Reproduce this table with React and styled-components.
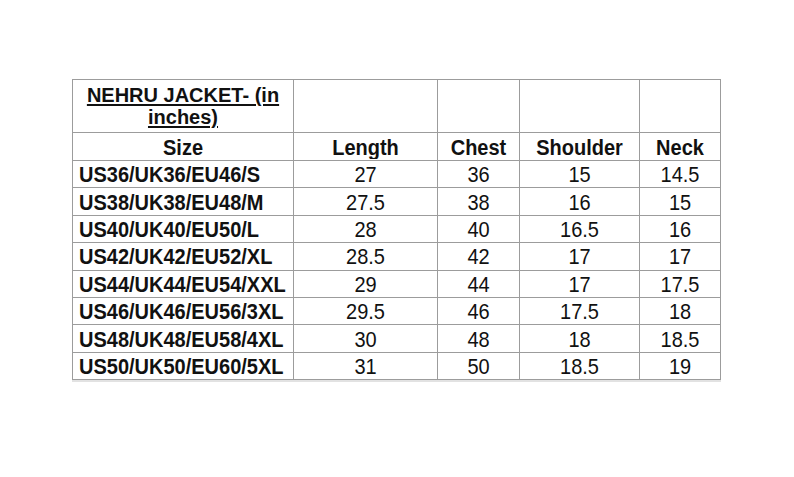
import React from "react";
import styled, { createGlobalStyle } from "styled-components";

const GlobalStyle = createGlobalStyle`
  html, body {
    margin: 0;
    padding: 0;
    background: #ffffff;
  }
  body {
    font-family: "Liberation Sans", Arial, sans-serif;
  }
`;

const Page = styled.div`
  width: 794px;
  height: 477px;
  box-sizing: border-box;
  padding: 79px 0 0 72px;
  background: #fff;
`;

const Table = styled.table`
  border-collapse: collapse;
  table-layout: fixed;
  color: #111;
  font-family: "Liberation Sans", Arial, sans-serif;
  font-size: 20px;
  box-shadow: 0 2px 0 #e2e2e2;
`;

const Cell = styled.td`
  border: 1px solid #9c9c9c;
  padding: 0 6px;
  height: ${(p) => p.h || 26.4}px;
  line-height: 22px;
  text-align: ${(p) => (p.left ? "left" : "center")};
  font-weight: ${(p) => (p.bold ? 700 : 400)};
  vertical-align: middle;
  white-space: nowrap;
  overflow: hidden;
`;

const Text = styled.span`
  display: inline-block;
  transform: scaleY(1.08);
`;

const Title = styled.td`
  border: 1px solid #9c9c9c;
  height: 52px;
  padding: 0 8px;
  text-align: center;
  font-weight: 700;
  line-height: 22px;
  vertical-align: middle;
  text-decoration: underline;
  text-underline-offset: 2px;
`;

const widths = [221, 144, 82, 120, 81];

const rows = [
  ["US36/UK36/EU46/S", "27", "36", "15", "14.5"],
  ["US38/UK38/EU48/M", "27.5", "38", "16", "15"],
  ["US40/UK40/EU50/L", "28", "40", "16.5", "16"],
  ["US42/UK42/EU52/XL", "28.5", "42", "17", "17"],
  ["US44/UK44/EU54/XXL", "29", "44", "17", "17.5"],
  ["US46/UK46/EU56/3XL", "29.5", "46", "17.5", "18"],
  ["US48/UK48/EU58/4XL", "30", "48", "18", "18.5"],
  ["US50/UK50/EU60/5XL", "31", "50", "18.5", "19"],
];

export default function App() {
  return (
    <>
      <GlobalStyle />
      <Page>
        <Table>
          <colgroup>
            {widths.map((w, i) => (
              <col key={i} style={{ width: w }} />
            ))}
          </colgroup>
          <tbody>
            <tr>
              <Title>NEHRU JACKET- (in inches)</Title>
              <Cell h={52} />
              <Cell h={52} />
              <Cell h={52} />
              <Cell h={52} />
            </tr>
            <tr>
              {["Size", "Length", "Chest", "Shoulder", "Neck"].map((h) => (
                <Cell bold h={27} key={h}>
                  <Text>{h}</Text>
                </Cell>
              ))}
            </tr>
            {rows.map((r) => (
              <tr key={r[0]}>
                <Cell bold left>
                  <Text>{r[0]}</Text>
                </Cell>
                {r.slice(1).map((v, i) => (
                  <Cell key={i}>
                    <Text>{v}</Text>
                  </Cell>
                ))}
              </tr>
            ))}
          </tbody>
        </Table>
      </Page>
    </>
  );
}
